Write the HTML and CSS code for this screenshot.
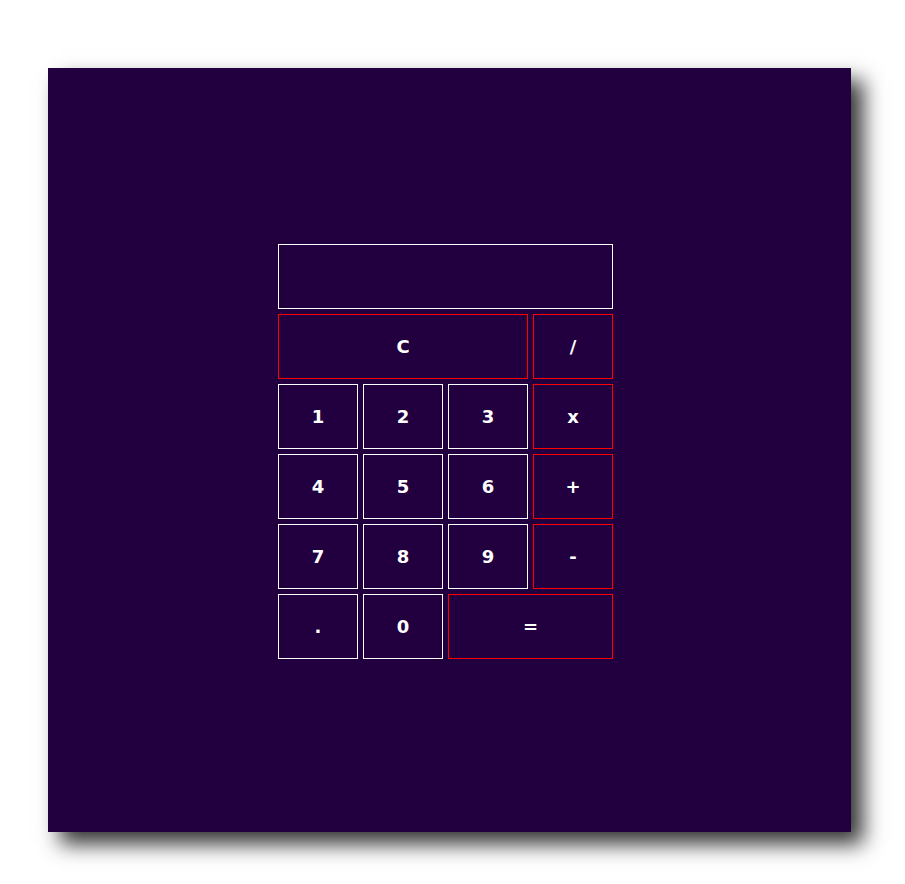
FILE: index.html
```html
<!DOCTYPE html>
<html>
<head>
<meta charset="utf-8">
<link rel="stylesheet" href="styles.css">
</head>
<body>
<div class="stage">
  <div class="calc">
    <div class="display"></div>
    <button class="key op wide">C</button>
    <button class="key op">/</button>
    <button class="key">1</button>
    <button class="key">2</button>
    <button class="key">3</button>
    <button class="key op">x</button>
    <button class="key">4</button>
    <button class="key">5</button>
    <button class="key">6</button>
    <button class="key op">+</button>
    <button class="key">7</button>
    <button class="key">8</button>
    <button class="key">9</button>
    <button class="key op">-</button>
    <button class="key">.</button>
    <button class="key">0</button>
    <button class="key op eq">=</button>
  </div>
</div>
</body>
</html>
```
FILE: styles.css
```css
html, body {
  margin: 0;
  padding: 0;
  background: #ffffff;
}
body {
  padding: 68px 0 52px 48px;
}
.stage {
  width: 803px;
  height: 764px;
  background: #220040;
  box-shadow: 12px 12px 20px rgba(0, 0, 0, 0.8);
  display: flex;
  justify-content: center;
  align-items: flex-start;
  padding: 176px 8px 0 0;
  box-sizing: border-box;
}
.calc {
  display: grid;
  grid-template-columns: repeat(4, 80px);
  grid-auto-rows: 65px;
  gap: 5px;
}
.display {
  grid-column: span 4;
  border: 1px solid #ffffff;
  box-sizing: border-box;
}
.key {
  background: #220040;
  color: #ffffff;
  border: 1px solid #ffffff;
  box-sizing: border-box;
  margin: 0;
  padding: 0;
  font-family: "DejaVu Sans", sans-serif;
  font-weight: bold;
  font-size: 18px;
}
.key.op {
  border-color: #ff0000;
}
.key.wide {
  grid-column: span 3;
}
.key.eq {
  grid-column: span 2;
}
```
